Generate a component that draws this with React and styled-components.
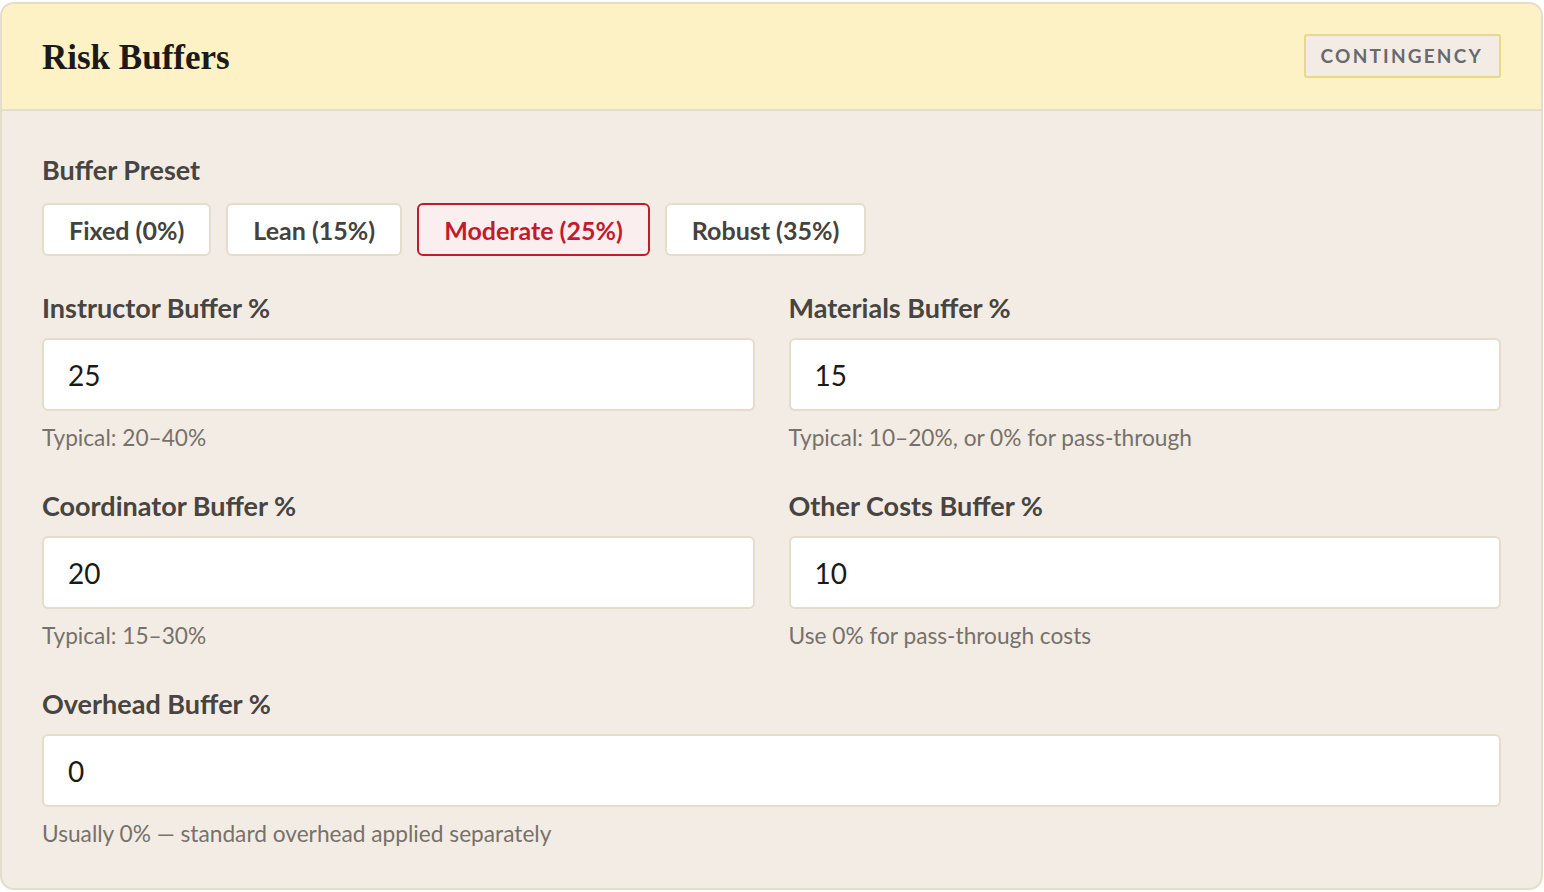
import React, { useState } from "react";
import styled, { createGlobalStyle } from "styled-components";

const GlobalStyle = createGlobalStyle`
  html, body {
    margin: 0;
    padding: 0;
    background: #ffffff;
    font-family: Lato, "Noto Sans", sans-serif;
  }
  * { box-sizing: border-box; }
`;

// 카드 전체
const Card = styled.section`
  margin: 2px 1px 0 0;
  border: 2px solid #e6dccb;
  border-radius: 14px;
  background-color: #f3ece4;
  overflow: hidden;
`;

// 노란 헤더
const Header = styled.header`
  display: flex;
  align-items: center;
  justify-content: space-between;
  height: 107px;
  padding: 0 40px 0 40px;
  background-color: #fdf1c6;
  border-bottom: 2px solid #e6dccb;
`;

const Title = styled.h2`
  margin: 2px 0 0 0;
  font-family: "Liberation Serif", "DejaVu Serif", serif;
  font-weight: 700;
  font-size: 35px;
  color: #1c1a17;
`;

const Badge = styled.span`
  display: inline-flex;
  align-items: center;
  height: 44px;
  margin-top: -2px;
  padding: 0 16px 0 15px;
  border: 2px solid #e9d78a;
  border-radius: 3px;
  background-color: #f3ece4;
  color: #686a6d;
  font-size: 19px;
  font-weight: 700;
  letter-spacing: 2.2px;
  text-transform: uppercase;
`;

const Body = styled.div`
  padding: 44px 40px 41px 40px;
`;

const Label = styled.div`
  font-size: 27px;
  font-weight: 700;
  line-height: 29px;
  color: #474441;
  margin-bottom: ${(p) => p.$gap || 16}px;
`;

const PresetRow = styled.div`
  display: flex;
  gap: 15px;
  margin-bottom: 37px;
`;

const PresetButton = styled.button`
  height: 53px;
  padding: 0 25px;
  border: 2px solid ${(p) => (p.$active ? "#c11b2c" : "#e6dccb")};
  border-radius: 6px;
  background-color: ${(p) => (p.$active ? "#fbeeee" : "#ffffff")};
  color: ${(p) => (p.$active ? "#c11b2c" : "#45423e")};
  font-family: Lato, "Noto Sans", sans-serif;
  font-size: 25px;
  font-weight: 700;
  cursor: pointer;
`;

const Grid = styled.div`
  display: grid;
  grid-template-columns: 1fr 1fr;
  column-gap: 34px;
  row-gap: 40px;
`;

const Field = styled.div`
  display: flex;
  flex-direction: column;
  grid-column: ${(p) => (p.$wide ? "1 / -1" : "auto")};
`;

const Input = styled.input`
  width: 100%;
  height: 73px;
  padding: 0 24px;
  border: 2px solid #e6dccb;
  border-radius: 6px;
  background-color: #ffffff;
  color: #1c1a17;
  font-family: Lato, "Noto Sans", sans-serif;
  font-size: 28px;
  outline: none;
`;

const Hint = styled.div`
  margin-top: 14px;
  font-size: 22.7px;
  line-height: 26px;
  color: #77716b;
`;

const presets = [
  { name: "Fixed", pct: 0 },
  { name: "Lean", pct: 15 },
  { name: "Moderate", pct: 25 },
  { name: "Robust", pct: 35 },
];

const fields = [
  { label: "Instructor Buffer %", value: "25", hint: "Typical: 20–40%" },
  { label: "Materials Buffer %", value: "15", hint: "Typical: 10–20%, or 0% for pass-through" },
  { label: "Coordinator Buffer %", value: "20", hint: "Typical: 15–30%" },
  { label: "Other Costs Buffer %", value: "10", hint: "Use 0% for pass-through costs" },
  { label: "Overhead Buffer %", value: "0", hint: "Usually 0% — standard overhead applied separately", wide: true },
];

const App = () => {
  const [active, setActive] = useState("Moderate");
  return (
    <>
      <GlobalStyle />
      <Card>
        <Header>
          <Title>Risk Buffers</Title>
          <Badge>Contingency</Badge>
        </Header>
        <Body>
          <Label $gap={19}>Buffer Preset</Label>
          <PresetRow>
            {presets.map((p) => (
              <PresetButton
                key={p.name}
                $active={active === p.name}
                onClick={() => setActive(p.name)}
              >
                {p.name} ({p.pct}%)
              </PresetButton>
            ))}
          </PresetRow>
          <Grid>
            {fields.map((f) => (
              <Field key={f.label} $wide={f.wide}>
                <Label>{f.label}</Label>
                <Input defaultValue={f.value} />
                <Hint>{f.hint}</Hint>
              </Field>
            ))}
          </Grid>
        </Body>
      </Card>
    </>
  );
};

export default App;
